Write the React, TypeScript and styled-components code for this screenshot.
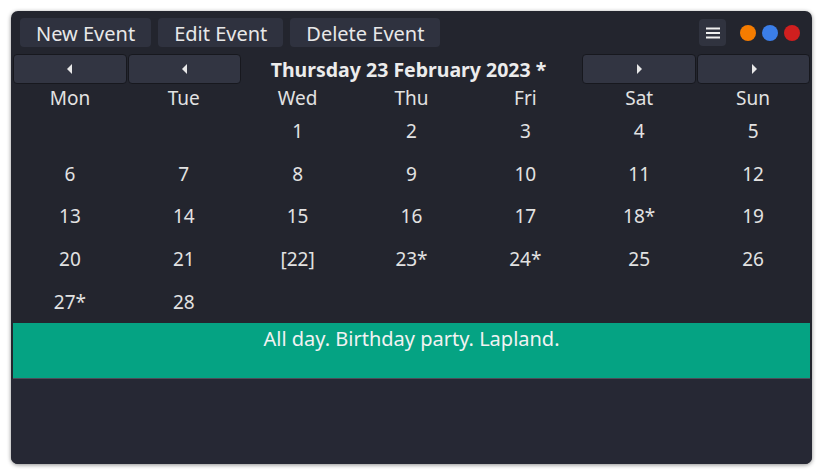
import React from 'react';
import styled, { createGlobalStyle } from 'styled-components';

const Global = createGlobalStyle`
  html, body {
    margin: 0;
    padding: 0;
    background: #ffffff;
  }
  body {
    font-family: 'Noto Sans', 'Open Sans', sans-serif;
  }
`;

const Page = styled.div`
  width: 824px;
  height: 475px;
  padding: 11px 12px 11px 11px;
  box-sizing: border-box;
`;

const Window = styled.div`
  height: 453px;
  background: #23252e;
  border-radius: 7px;
  box-shadow: 0 1px 4px rgba(0, 0, 0, 0.45);
  display: flex;
  flex-direction: column;
  overflow: hidden;
  color: #e6e6e6;
`;

const Toolbar = styled.div`
  display: flex;
  align-items: center;
  gap: 7px;
  padding: 7px 9px 0 9px;
  height: 29px;
`;

const ToolButton = styled.button`
  height: 29px;
  border: none;
  border-radius: 4px;
  background: #2f323f;
  color: #e8e8e8;
  font-family: inherit;
  font-size: 20px;
  padding: 2px 16px 0 16px;
  line-height: 27px;
`;

const Spacer = styled.div`
  flex: 1;
`;

const MenuButton = styled.button`
  width: 27px;
  height: 27px;
  border: none;
  border-radius: 4px;
  background: #30333f;
  display: flex;
  align-items: center;
  justify-content: center;
  padding: 0;
  margin-right: 7px;
`;

const Dots = styled.div`
  display: flex;
  gap: 6px;
  margin-right: 3px;
`;

const Dot = styled.span<{ $c: string }>`
  width: 16px;
  height: 16px;
  border-radius: 50%;
  background: ${(p) => p.$c};
`;

const NavRow = styled.div`
  display: grid;
  grid-template-columns: 114px 113px 1fr 114px 113px;
  gap: 1px;
  margin: 7px 2px 0 2px;
  height: 30px;
`;

const NavButton = styled.button`
  height: 30px;
  border: 1px solid #17181e;
  border-radius: 4px;
  background: #323542;
  display: flex;
  align-items: center;
  justify-content: center;
  padding: 0;
`;

const Title = styled.div`
  text-align: center;
  font-weight: 700;
  font-size: 19.5px;
  line-height: 32px;
  padding-right: 6px;
  color: #ececec;
`;

const Grid = styled.div`
  display: grid;
  grid-template-columns: repeat(7, 1fr);
  margin: 0 2px;
`;

const Head = styled.div`
  text-align: center;
  font-size: 19px;
  height: 26px;
  line-height: 28px;
  color: #e2e2e2;
`;

const Cell = styled.div`
  text-align: center;
  font-size: 19px;
  height: 42.7px;
  line-height: 43px;
  color: #e2e2e2;
`;

const EventBar = styled.div`
  margin: 0 2px;
  height: 55px;
  background: #05a383;
  border-bottom: 1px solid #4b4e5a;
  text-align: center;
  color: #f2f2f2;
  font-size: 20px;
  line-height: 32px;
`;

const Rest = styled.div`
  flex: 1;
  background: #262834;
`;

const Arrow = ({ dir }: { dir: 'l' | 'r' }) => (
  <svg width="8" height="10" viewBox="0 0 8 10">
    {dir === 'l' ? (
      <path d="M6 0 L1 5 L6 10 Z" fill="#e8e8e8" />
    ) : (
      <path d="M2 0 L7 5 L2 10 Z" fill="#e8e8e8" />
    )}
  </svg>
);

const days = ['Mon', 'Tue', 'Wed', 'Thu', 'Fri', 'Sat', 'Sun'];
const cells = [
  '', '', '1', '2', '3', '4', '5',
  '6', '7', '8', '9', '10', '11', '12',
  '13', '14', '15', '16', '17', '18*', '19',
  '20', '21', '[22]', '23*', '24*', '25', '26',
  '27*', '28', '', '', '', '', '',
];

export default function App() {
  return (
    <>
      <Global />
      <Page>
        <Window>
          <Toolbar>
            <ToolButton>New Event</ToolButton>
            <ToolButton>Edit Event</ToolButton>
            <ToolButton>Delete Event</ToolButton>
            <Spacer />
            <MenuButton>
              <svg width="14" height="12" viewBox="0 0 14 12">
                <rect x="0" y="0.5" width="14" height="2" fill="#f0f0f0" />
                <rect x="0" y="5" width="14" height="2" fill="#f0f0f0" />
                <rect x="0" y="9.5" width="14" height="2" fill="#f0f0f0" />
              </svg>
            </MenuButton>
            <Dots>
              <Dot $c="#f57c00" />
              <Dot $c="#3b7ee8" />
              <Dot $c="#d01f1f" />
            </Dots>
          </Toolbar>
          <NavRow>
            <NavButton><Arrow dir="l" /></NavButton>
            <NavButton><Arrow dir="l" /></NavButton>
            <Title>Thursday 23 February 2023 *</Title>
            <NavButton><Arrow dir="r" /></NavButton>
            <NavButton><Arrow dir="r" /></NavButton>
          </NavRow>
          <Grid>
            {days.map((d) => (
              <Head key={d}>{d}</Head>
            ))}
            {cells.map((c, i) => (
              <Cell key={i}>{c}</Cell>
            ))}
          </Grid>
          <EventBar>All day. Birthday party. Lapland.</EventBar>
          <Rest />
        </Window>
      </Page>
    </>
  );
}
